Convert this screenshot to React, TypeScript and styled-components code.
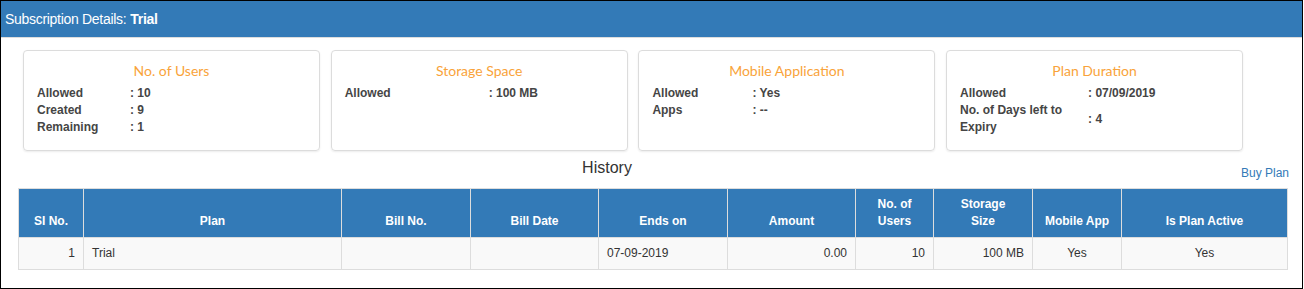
import React from "react"
import styled, { createGlobalStyle } from "styled-components"

const blue = "#337ab7"
const orange = "#f9a33a"
const text = "#333333"

const GlobalStyle = createGlobalStyle`
  html, body {
    margin: 0;
    padding: 0;
    background: #ffffff;
  }
  body {
    font-family: "Liberation Sans", Arial, sans-serif;
    font-size: 12px;
    color: ${text};
  }
`

const Frame = styled.div`
  width: 1303px;
  height: 289px;
  box-sizing: border-box;
  border: 1px solid #000;
  display: flex;
  flex-direction: column;
`

const Header = styled.div`
  height: 36px;
  background: ${blue};
  border-bottom: 1px solid #dddddd;
  color: #fff;
  font-size: 14px;
  display: flex;
  align-items: center;
  padding-left: 4px;
  letter-spacing: -0.3px;

  b {
    margin-left: 4px;
  }
`

const CardRow = styled.div`
  display: flex;
  gap: 10.7px;
  padding: 12px 0 0 22px;
`

const Card = styled.div`
  width: 297px;
  height: 101px;
  box-sizing: border-box;
  border: 1px solid #dcdcdc;
  border-radius: 4px;
  box-shadow: 0 1px 2px rgba(0, 0, 0, 0.08);
  padding: 10px 13px;
`

const CardTitle = styled.div`
  font-family: Lato, "Liberation Sans", sans-serif;
  font-size: 14px;
  line-height: 20px;
  color: ${orange};
  text-align: center;
  margin-bottom: 4px;
`

const InfoGrid = styled.div<{ $label: number }>`
  display: grid;
  grid-template-columns: ${(p) => p.$label}px 1fr;
  align-items: center;
  font-weight: bold;
  font-size: 12px;
  line-height: 17px;
  color: #454545;
`

const HistoryBar = styled.div`
  display: grid;
  grid-template-columns: 1176px 1fr;
  padding: 8px 0 0 18px;
  height: 29px;
`

const HistoryTitle = styled.div`
  font-size: 16px;
  line-height: 18px;
  text-align: center;
`

const BuyLink = styled.a`
  align-self: start;
  justify-self: end;
  margin: 7px 13px 0 0;
  color: ${blue};
  font-size: 12px;
  text-decoration: none;
  line-height: 14px;
`

const TableWrap = styled.div`
  padding-left: 17px;
`

const Table = styled.table`
  width: 1269px;
  border-collapse: collapse;
  table-layout: fixed;
  font-size: 12px;
  line-height: 17px;
`

const Th = styled.th`
  background: ${blue};
  color: #fff;
  font-weight: bold;
  text-align: center;
  vertical-align: bottom;
  white-space: pre-line;
  padding: 7px 8px 7px;
  border: 1px solid #dddddd;
`

const Td = styled.td<{ $align?: "left" | "right" | "center" }>`
  background: #f9f9f9;
  color: ${text};
  text-align: ${(p) => p.$align || "left"};
  padding: 7px 8px 7px;
  border: 1px solid #dddddd;
`

type Info = { label: string; value: string }

const cards: { title: string; label: number; rows: Info[] }[] = [
  {
    title: "No. of Users",
    label: 93,
    rows: [
      { label: "Allowed", value: ": 10" },
      { label: "Created", value: ": 9" },
      { label: "Remaining", value: ": 1" },
    ],
  },
  { title: "Storage Space", label: 144, rows: [{ label: "Allowed", value: ": 100 MB" }] },
  {
    title: "Mobile Application",
    label: 100,
    rows: [
      { label: "Allowed", value: ": Yes" },
      { label: "Apps", value: ": --" },
    ],
  },
  {
    title: "Plan Duration",
    label: 128,
    rows: [
      { label: "Allowed", value: ": 07/09/2019" },
      { label: "No. of Days left to Expiry", value: ": 4" },
    ],
  },
]

const columns = [
  { title: "SI No.", width: 65 },
  { title: "Plan", width: 258 },
  { title: "Bill No.", width: 129 },
  { title: "Bill Date", width: 128 },
  { title: "Ends on", width: 129 },
  { title: "Amount", width: 128 },
  { title: "No. of\nUsers", width: 78 },
  { title: "Storage\nSize", width: 99 },
  { title: "Mobile App", width: 89 },
  { title: "Is Plan Active", width: 166 },
]

export default function App() {
  return (
    <>
      <GlobalStyle />
      <Frame>
        <Header>
          Subscription Details:<b>Trial</b>
        </Header>
        <CardRow>
          {cards.map((c) => (
            <Card key={c.title}>
              <CardTitle>{c.title}</CardTitle>
              <InfoGrid $label={c.label}>
                {c.rows.map((r) => (
                  <React.Fragment key={r.label}>
                    <span>{r.label}</span>
                    <span>{r.value}</span>
                  </React.Fragment>
                ))}
              </InfoGrid>
            </Card>
          ))}
        </CardRow>
        <HistoryBar>
          <HistoryTitle>History</HistoryTitle>
          <BuyLink href="#">Buy Plan</BuyLink>
        </HistoryBar>
        <TableWrap>
          <Table>
            <colgroup>
              {columns.map((c) => (
                <col key={c.title} style={{ width: c.width }} />
              ))}
            </colgroup>
            <thead>
              <tr>
                {columns.map((c) => (
                  <Th key={c.title}>{c.title}</Th>
                ))}
              </tr>
            </thead>
            <tbody>
              <tr>
                <Td $align="right">1</Td>
                <Td>Trial</Td>
                <Td />
                <Td />
                <Td>07-09-2019</Td>
                <Td $align="right">0.00</Td>
                <Td $align="right">10</Td>
                <Td $align="right">100 MB</Td>
                <Td $align="center">Yes</Td>
                <Td $align="center">Yes</Td>
              </tr>
            </tbody>
          </Table>
        </TableWrap>
      </Frame>
    </>
  )
}
